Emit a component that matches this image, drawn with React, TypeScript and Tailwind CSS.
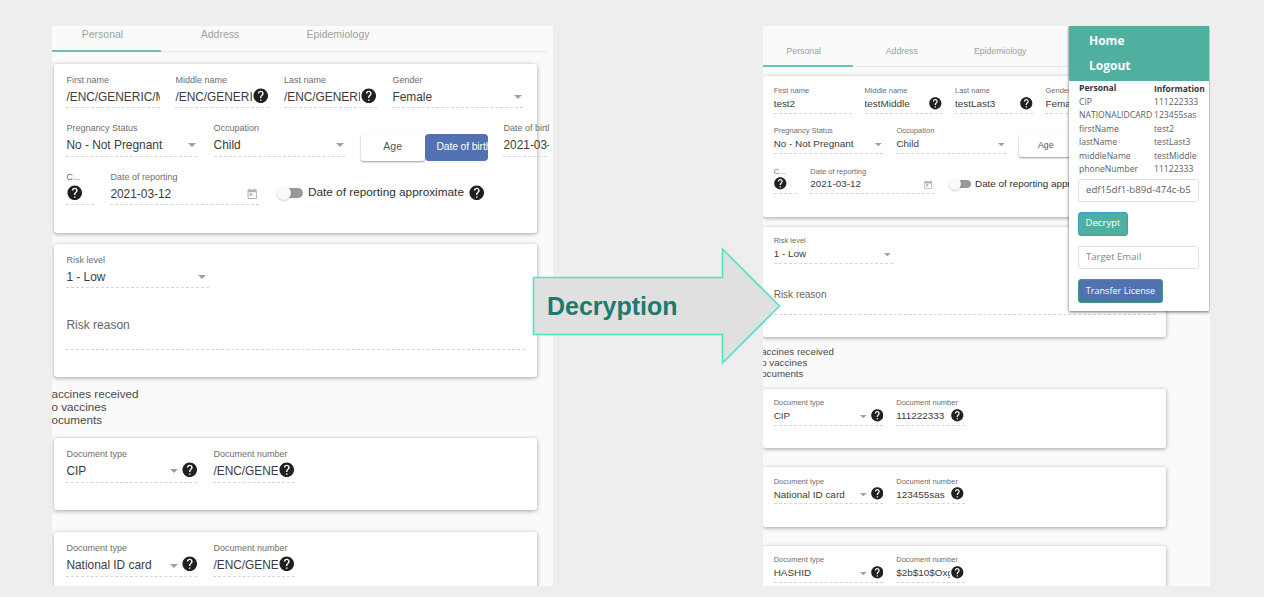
import React from "react";
import { MdHelp, MdToday } from "react-icons/md";

type FieldProps = {
  label: string;
  value?: string;
  width: string;
  arrow?: string;
  help?: string;
  helpLeft?: boolean;
  calendar?: boolean;
};

const Help = () => <MdHelp className="h-[1.75em] w-[1.75em] shrink-0 text-[#202020]" />;

function Field({ label, value, width, arrow, help, helpLeft, calendar }: FieldProps) {
  return (
    <div className={`relative h-[3.5em] shrink-0 ${width}`}>
      <div className="h-[1.3em] whitespace-nowrap text-[#6e6e6e]">
        <span className="block text-[0.9em] leading-[1.48em]">{label}</span>
      </div>
      <div className="flex h-[2.15em] items-center overflow-hidden whitespace-nowrap border-b border-dashed border-[#d6d6d6] text-[#3c3c3c]">
        {helpLeft && <span className="-ml-[0.05em] -mt-[0.3em]"><Help /></span>}
        <span className="block min-w-0 flex-1 overflow-hidden">
          <span className="block text-[1.19em] leading-[1.7em]">{value}</span>
        </span>
        {calendar && <MdToday className="mr-[0.1em] h-[1.25em] w-[1.25em] text-[#b4b4b4]" />}
        {arrow && (
          <svg viewBox="0 0 8 4" className={`h-[0.4em] w-[0.8em] shrink-0 ${arrow}`}>
            <path d="M0 0h8L4 4z" fill="#a0a0a0" />
          </svg>
        )}
        {help && <span className={`-mt-[0.3em] ${help}`}><Help /></span>}
      </div>
    </div>
  );
}

function Card({ height, children }: { height: string; children: React.ReactNode }) {
  return (
    <section
      className={`ml-[0.2em] w-[48.3em] shrink-0 rounded-[0.3em] bg-white pl-[1.24em] pt-[1em] shadow-[0_1px_4px_rgba(0,0,0,0.36)] ${height}`}
    >
      {children}
    </section>
  );
}

function DocumentCard({ type, number }: { type: string; number: string }) {
  return (
    <Card height="h-[7.15em]">
      <div className="flex gap-[1.6em]">
        <Field label="Document type" value={type} width="w-[13.1em]" arrow="mr-[0.3em]" help="-mr-[0.15em]" />
        <Field label="Document number" value={number} width="w-[8.2em]" help="-mr-[0.05em]" />
      </div>
    </Card>
  );
}

type Patient = {
  first: string;
  middle: string;
  last: string;
  documents: { type: string; number: string }[];
};

function PatientForm({ patient, tabs }: { patient: Patient; tabs: string }) {
  return (
    <div className="flex flex-col">
      <nav className={`flex w-[49.5em] shrink-0 border-b border-[#e8e8e8] text-[#a0a0a0] ${tabs}`}>
        {["Personal", "Address", "Epidemiology"].map((tab, i) => (
          <div
            key={tab}
            className={`-mb-px flex items-end justify-center border-b-2 pb-[0.9em] ${
              i === 0 ? "w-[10.9em] border-[#6fc0b3] pr-[0.8em]" : "w-[11.8em] border-transparent"
            }`}
          >
            <span className="block text-[1.05em] leading-[1.25em]">{tab}</span>
          </div>
        ))}
      </nav>
      <div className="mt-[1.15em] flex flex-col">
        <Card height="h-[16.9em]">
          <div className="flex gap-[1.5em]">
            <Field label="First name" value={patient.first} width="w-[9.4em]" />
            <Field label="Middle name" value={patient.middle} width="w-[9.35em]" help="-mr-[0.05em]" />
            <Field label="Last name" value={patient.last} width="w-[9.35em]" help="-mr-[0.05em]" />
            <Field label="Gender" value="Female" width="w-[13.1em]" arrow="mr-[0.1em]" />
          </div>
          <div className="mt-[1.35em] flex h-[3.5em] gap-[1.62em]">
            <Field label="Pregnancy Status" value="No - Not Pregnant" width="w-[13.1em]" arrow="mr-[0.1em]" />
            <Field label="Occupation" value="Child" width="w-[13.1em]" arrow="mr-[0.1em]" />
            <div className="mt-[1.15em] flex h-[2.7em] w-[12.75em] shrink-0 whitespace-nowrap">
              <div className="flex w-1/2 items-center justify-center rounded-[0.3em] bg-white text-[#555555] shadow-[0_1px_2px_rgba(0,0,0,0.4)]">
                <span className="text-[1.05em]">Age</span>
              </div>
              <div className="flex w-1/2 items-center overflow-hidden rounded-[0.4em] bg-[#5271b0] pl-[1.2em] text-white">
                <span className="text-[1.03em] tracking-[-0.01em]">Date of birth</span>
              </div>
            </div>
            <div className="-ml-[0.1em] w-[4.6em] shrink-0 overflow-hidden">
              <Field label="Date of birth" value="2021-03-12" width="w-[13em]" />
            </div>
          </div>
          <div className="mt-[1.35em] flex gap-[1.6em]">
            <Field label="C..." width="w-[2.8em]" helpLeft />
            <Field label="Date of reporting" value="2021-03-12" width="w-[14.9em]" calendar />
            <div className="flex h-[3.5em] shrink-0 items-center whitespace-nowrap pt-[0.95em] text-[#303030]">
              <span className="ml-[0.15em] flex w-[2.6em] items-center">
                <span className="z-10 h-[1.4em] w-[1.4em] rounded-full bg-[#fafafa] shadow-[0_1px_2px_rgba(0,0,0,0.2)]" />
                <span className="-ml-[0.4em] h-[1em] w-[1.6em] rounded-r-full bg-[#999999]" />
              </span>
              <span className="ml-[0.5em] w-[16em]">
                <span className="text-[1.18em]">Date of reporting approximate</span>
              </span>
              <Help />
            </div>
          </div>
        </Card>
        <div className="mt-[1.1em] flex flex-col">
          <Card height="h-[13.3em]">
            <Field label="Risk level" value="1 - Low" width="w-[14.3em]" arrow="mr-[0.3em]" />
            <div className="mt-[2.4em] h-[3.7em] w-[45.9em] border-b border-dashed border-[#d6d6d6] pt-[0.3em] text-[#666666]">
              <span className="block text-[1.2em] leading-[1.5em]">Risk reason</span>
            </div>
          </Card>
        </div>
        <div className="mt-[1em] h-[5.15em] text-[#4a4a4a]">
          <div className="-ml-[0.05em] text-[1.17em] leading-[1.14em]">
            <div>accines received</div>
            <div>o vaccines</div>
            <div>ocuments</div>
          </div>
        </div>
        <div className="flex flex-col gap-[2.28em]">
          {patient.documents.map((d) => (
            <DocumentCard key={d.type} type={d.type} number={d.number} />
          ))}
        </div>
      </div>
    </div>
  );
}

const encrypted: Patient = {
  first: "/ENC/GENERIC/M",
  middle: "/ENC/GENERI",
  last: "/ENC/GENERI",
  documents: [
    { type: "CIP", number: "/ENC/GENE" },
    { type: "National ID card", number: "/ENC/GENE" },
  ],
};

const decrypted: Patient = {
  first: "test2",
  middle: "testMiddle",
  last: "testLast3",
  documents: [
    { type: "CIP", number: "111222333" },
    { type: "National ID card", number: "123455sas" },
    { type: "HASHID", number: "$2b$10$Oxg" },
  ],
};

const info = [
  ["CIP", "111222333"],
  ["NATIONALIDCARD", "123455sas"],
  ["firstName", "test2"],
  ["lastName", "testLast3"],
  ["middleName", "testMiddle"],
  ["phoneNumber", "11122333"],
];

function Popup() {
  return (
    <aside className="absolute right-px top-0 h-[285px] w-[140px] bg-white font-['Open_Sans',sans-serif] text-[8.6px] text-[#5a6066] shadow-[0_1px_3px_rgba(0,0,0,0.6)]">
      <div className="flex h-[55px] flex-col bg-[#4fb0a0] pl-5 pt-[3px] text-[12px] font-bold leading-[24.5px] text-white">
        <div>Home</div>
        <div>Logout</div>
      </div>
      <div className="pl-[10px] pt-[1px] leading-[13.5px]">
        <div className="flex whitespace-nowrap font-bold text-[#30363c]">
          <span className="w-[75px] shrink-0">Personal</span>
          <span className="text-[8.4px]">Information</span>
        </div>
        {info.map(([k, v]) => (
          <div key={k} className="flex whitespace-nowrap">
            <span className="w-[75px] shrink-0">
              <span>{k}</span>
            </span>
            <span>{v}</span>
          </div>
        ))}
      </div>
      <div className="ml-[9px] mt-[2px] flex flex-col items-start gap-[10px] text-[9.6px]">
        <div className="flex h-[23px] w-[121px] items-center whitespace-nowrap rounded-[3px] border border-[#dfe3e6] pl-[7px] pt-px text-[9.65px]">edf15df1-b89d-474c-b5</div>
        <div className="flex h-[24px] w-[50px] items-center justify-center rounded-[3px] border border-[#35a0d0] bg-[#4fb0a0] text-white">Decrypt</div>
        <div className="flex h-[23px] w-[121px] items-center rounded-[3px] border border-[#dfe3e6] pl-[7px] pt-px text-[#80868c]">Target Email</div>
        <div className="flex h-[24px] w-[85px] items-center justify-center whitespace-nowrap rounded-[3px] border border-[#3f9a78] bg-[#5271b0] text-[9.1px] text-white">Transfer License</div>
      </div>
    </aside>
  );
}

export default function App() {
  return (
    <main className="relative flex h-[597px] w-[1264px] justify-between overflow-hidden bg-[#eeeeee] pl-[52px] pr-[54px] pt-[26px] font-['Liberation_Sans',Arial,sans-serif]">
      <div className="h-[560px] w-[501px] overflow-hidden bg-[#fafafa] text-[10px]">
        <PatientForm patient={encrypted} tabs="h-[2.6em]" />
      </div>
      <div className="relative h-[560px] w-[447px] overflow-hidden bg-[#fafafa] text-[8.34px]">
        <div className="-ml-[0.16em]">
          <PatientForm patient={decrypted} tabs="h-[4.9em]" />
        </div>
        <Popup />
      </div>
      <div className="absolute left-[532px] top-[247px] h-[118px] w-[250px]">
        <svg viewBox="532 247 250 118" className="absolute inset-0 h-full w-full">
          <path
            d="M533.5 277.5H722.5V249L779.5 306L722.5 363V334.5H533.5Z"
            fill="#e0e0e0"
            stroke="#50e3c8"
            strokeWidth="1.6"
          />
        </svg>
        <div className="relative flex h-full items-center pl-[15px] pt-[2px] text-[25px] font-bold text-[#1c7a70]">Decryption</div>
      </div>
    </main>
  );
}
